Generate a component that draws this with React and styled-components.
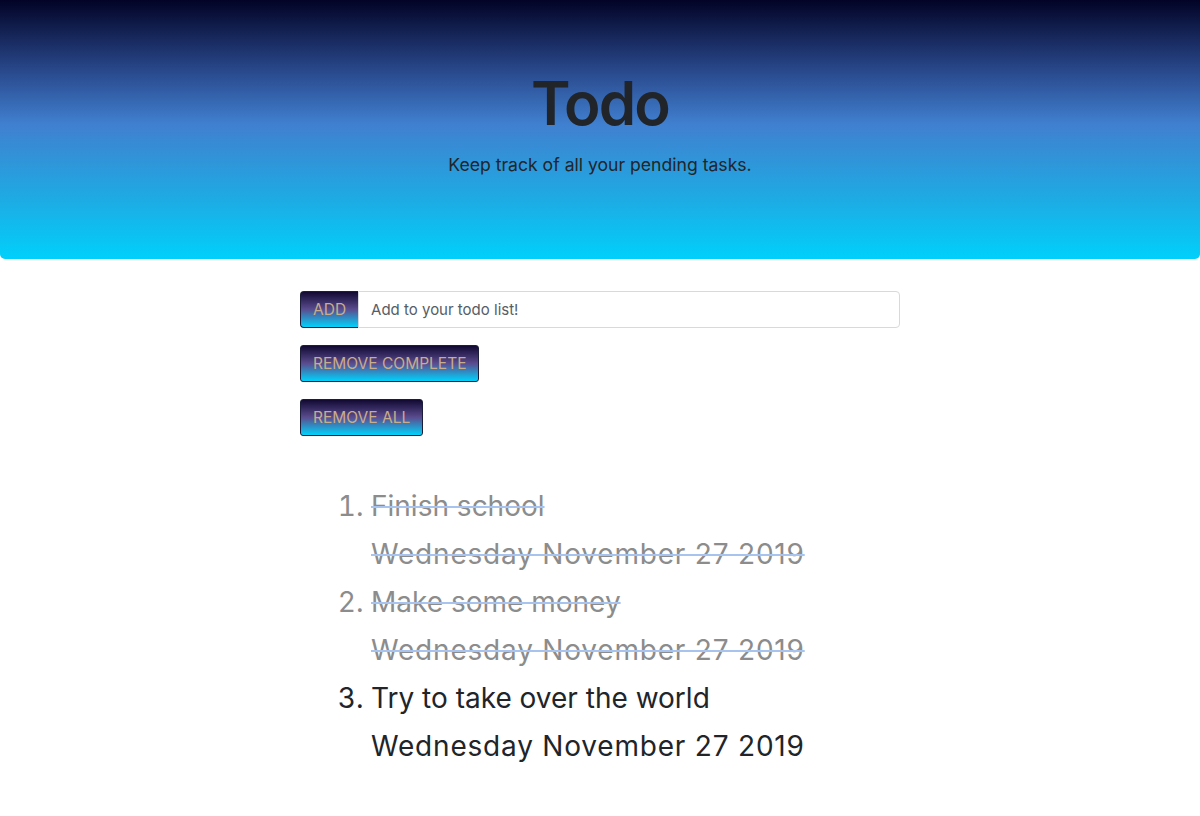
import React from 'react';
import styled, { createGlobalStyle } from 'styled-components';

const GlobalStyle = createGlobalStyle`
  body {
    margin: 0;
    background: #fff;
    font-family: Inter, "Noto Sans", "Liberation Sans", sans-serif;
    color: #212529;
  }
`;

const gradientBtn = `
  background: linear-gradient(to bottom, #120a33 0%, #5b4c8f 50%, #00d2fb 100%);
  color: #c9ad8a;
  text-transform: uppercase;
  font-family: inherit;
  font-size: 15.5px;
  border: 1px solid #1b1d3a;
  padding: 0 12px;
  height: 37px;
  cursor: pointer;
`;

const Jumbotron = styled.header`
  height: 259px;
  box-sizing: border-box;
  padding-top: 70px;
  text-align: center;
  border-radius: 0 0 5px 5px;
  background: linear-gradient(to bottom, #020326 0%, #2a4a8e 28%, #4080d0 48%, #20a8e2 75%, #00d0fb 100%);
`;

const Title = styled.h1`
  margin: 0;
  font-size: 60px;
  font-weight: 600;
  line-height: 66px;
  letter-spacing: -1.8px;
`;

const Lead = styled.p`
  margin: 18px 0 0;
  font-size: 17.6px;
  font-weight: 400;
`;

const Container = styled.main`
  width: 600px;
  margin: 32px auto 0;
`;

const InputGroup = styled.form`
  display: flex;
  height: 37px;
`;

const AddButton = styled.button`
  ${gradientBtn}
  border-radius: 4px 0 0 4px;
  border-right: none;
`;

const TextInput = styled.input`
  flex: 1;
  border: 1px solid #d6d9de;
  border-radius: 0 4px 4px 0;
  padding: 0 12px;
  font-family: inherit;
  font-size: 15px;
  color: #495057;
  &::placeholder { color: #565d64; }
`;

const Actions = styled.div`
  display: flex;
  flex-direction: column;
  align-items: flex-start;
  gap: 17px;
  margin-top: 17px;
`;

const ActionButton = styled.button`
  ${gradientBtn}
  border-radius: 3px;
`;

const List = styled.ol`
  margin: 46px 0 0;
  padding-left: 71px;
  font-size: 28px;
  line-height: 48px;
`;

const Item = styled.li`
  color: ${p => (p.done ? '#8c8c8c' : '#212529')};
  &::marker { color: ${p => (p.done ? '#8c8c8c' : '#212529')}; }
`;

const Line = styled.div`
  text-decoration: ${p => (p.done ? 'line-through' : 'none')};
  text-decoration-color: #a9c3ef;
  text-decoration-thickness: 2px;
  letter-spacing: ${p => (p.wide ? '0.8px' : '0')};
  width: fit-content;
`;

const todos = [
  { text: 'Finish school', date: 'Wednesday November 27 2019', done: true },
  { text: 'Make some money', date: 'Wednesday November 27 2019', done: true },
  { text: 'Try to take over the world', date: 'Wednesday November 27 2019', done: false },
];

export default function App() {
  return (
    <>
      <GlobalStyle />
      <Jumbotron>
        <Title>Todo</Title>
        <Lead>Keep track of all your pending tasks.</Lead>
      </Jumbotron>
      <Container>
        <InputGroup onSubmit={e => e.preventDefault()}>
          <AddButton type="submit">Add</AddButton>
          <TextInput placeholder="Add to your todo list!" />
        </InputGroup>
        <Actions>
          <ActionButton>Remove Complete</ActionButton>
          <ActionButton>Remove All</ActionButton>
        </Actions>
        <List>
          {todos.map(t => (
            <Item key={t.text} done={t.done}>
              <Line done={t.done}>{t.text}</Line>
              <Line done={t.done} wide>{t.date}</Line>
            </Item>
          ))}
        </List>
      </Container>
    </>
  );
}
